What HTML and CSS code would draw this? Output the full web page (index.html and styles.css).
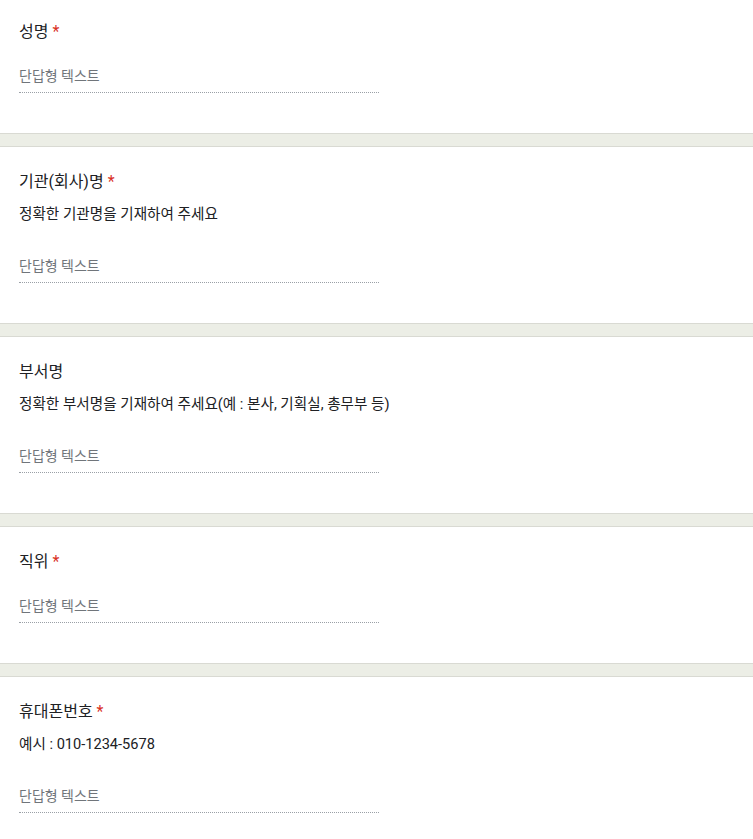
FILE: index.html
```html
<!DOCTYPE html>
<html lang="ko">
<head>
<meta charset="utf-8">
<title>Form</title>
<link rel="stylesheet" href="styles.css">
</head>
<body>
<div class="form">
  <section class="card card-first">
    <div class="title">성명<span class="req">*</span></div>
    <div class="input"><span class="ph">단답형 텍스트</span></div>
  </section>
  <section class="card">
    <div class="title">기관(회사)명<span class="req">*</span></div>
    <div class="desc">정확한 기관명을 기재하여 주세요</div>
    <div class="input"><span class="ph">단답형 텍스트</span></div>
  </section>
  <section class="card">
    <div class="title">부서명</div>
    <div class="desc">정확한 부서명을 기재하여 주세요(예 : 본사, 기획실, 총무부 등)</div>
    <div class="input"><span class="ph">단답형 텍스트</span></div>
  </section>
  <section class="card">
    <div class="title">직위<span class="req">*</span></div>
    <div class="input"><span class="ph">단답형 텍스트</span></div>
  </section>
  <section class="card card-last">
    <div class="title">휴대폰번호<span class="req">*</span></div>
    <div class="desc">예시 : 010-1234-5678</div>
    <div class="input"><span class="ph">단답형 텍스트</span></div>
  </section>
</div>
</body>
</html>
```
FILE: styles.css
```css
html, body {
  margin: 0;
  padding: 0;
}
body {
  background: #eceee6;
  font-family: Roboto, "Noto Sans CJK KR", sans-serif;
  color: #202124;
  overflow: hidden;
}
.form {
  display: flex;
  flex-direction: column;
  gap: 12px;
}
.card {
  background: #ffffff;
  border-top: 1px solid #d9dad3;
  border-bottom: 1px solid #d9dad3;
  padding: 23px 19px 40px;
}
.card-first {
  margin-top: -4px;
}
.card-last {
  padding-bottom: 26px;
}
.title {
  font-size: 16px;
  line-height: 24px;
  color: #202124;
}
.req {
  color: #d93025;
  margin-left: 4px;
}
.desc {
  font-size: 14.6px;
  line-height: 20px;
  margin-top: 10px;
  color: #202124;
}
.input {
  width: 360px;
  margin-top: 22px;
  padding-bottom: 6px;
  border-bottom: 1px dotted #9aa0a6;
  font-size: 14px;
  line-height: 20px;
}
.desc + .input {
  margin-top: 32px;
}
.ph {
  color: #70757a;
}
```
